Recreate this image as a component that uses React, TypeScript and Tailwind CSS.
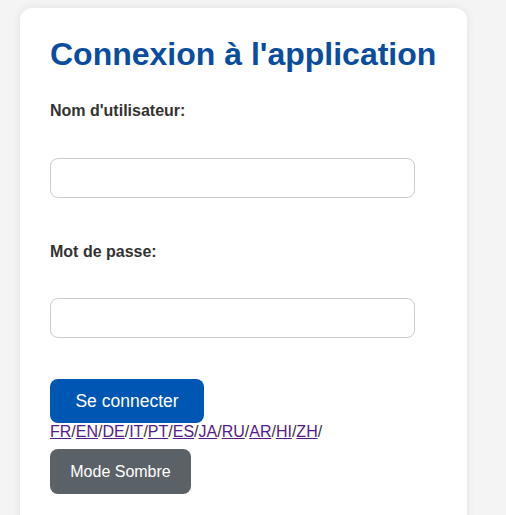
export default function App() {
  const langs = ["FR", "EN", "DE", "IT", "PT", "ES", "JA", "RU", "AR", "HI", "ZH"]

  return (
    <div className="min-h-screen bg-[#f4f4f4] pt-[8px] pl-[20px] font-['Liberation_Sans',Arial,sans-serif] text-[#333]">
      <div className="w-[447px] bg-white rounded-[12px] shadow-[0_0_10px_rgba(0,0,0,0.08)] pt-[28px] px-[30px] pb-[40px]">
        <h1 className="text-[32px] leading-[37px] font-bold text-[#0a4d9e]">Connexion à l'application</h1>

        <label className="block mt-[29px] text-[16px] leading-[18px] font-bold">Nom d'utilisateur:</label>
        <input type="text" className="block mt-[38px] h-[40px] w-[365px] border border-[#ccc] rounded-[8px] bg-white px-3 outline-none" />

        <label className="block mt-[45px] text-[16px] leading-[18px] font-bold">Mot de passe:</label>
        <input type="password" className="block mt-[37px] h-[40px] w-[365px] border border-[#ccc] rounded-[8px] bg-white px-3 outline-none" />

        <button className="block mt-[41px] h-[44px] w-[154px] rounded-[8px] bg-[#0056b3] text-white text-[17.5px]">
          Se connecter
        </button>

        <div className="text-[16px] leading-[18px] text-[#333]">
          {langs.map((l) => (
            <span key={l}>
              <a href="#" className="underline text-[#551a8b]">{l}</a>/
            </span>
          ))}
        </div>

        <button className="block mt-[8px] h-[45px] w-[141px] rounded-[8px] bg-[#5a6268] text-white text-[16px]">
          Mode Sombre
        </button>
      </div>
    </div>
  )
}
